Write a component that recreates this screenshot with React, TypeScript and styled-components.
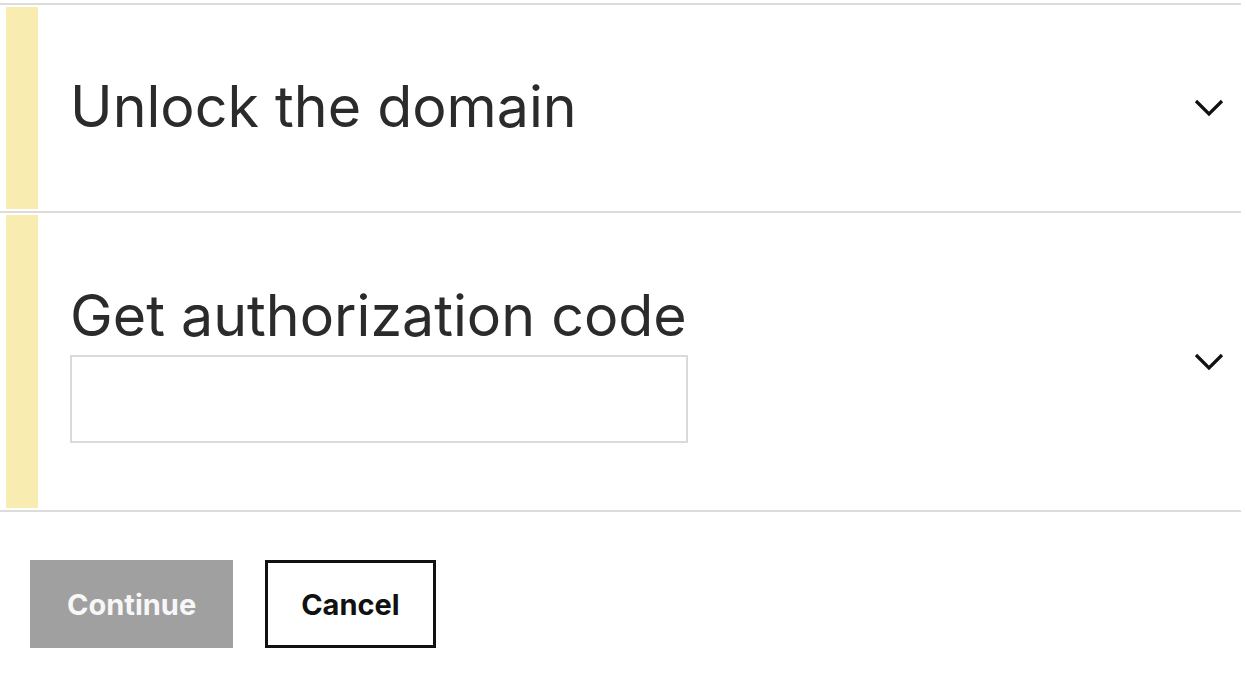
import React from "react";
import styled, { createGlobalStyle } from "styled-components";

const Global = createGlobalStyle`
  html, body { margin: 0; padding: 0; background: #ffffff; }
  body { font-family: Inter, "Liberation Sans", sans-serif; color: #2b2b2b; }
  * { box-sizing: border-box; }
`;

const Page = styled.div`
  width: 1241px;
  padding-top: 3px;
`;

const List = styled.div`
  border-top: 2px solid #dcdcdc;
`;

const Row = styled.section<{ $h: number }>`
  display: flex;
  align-items: stretch;
  height: ${(p) => p.$h}px;
  padding: 2px 16px 2px 6px;
  border-bottom: 2px solid #dcdcdc;
`;

const Bar = styled.div`
  width: 32px;
  flex: none;
  background: #f8ecb0;
`;

const Content = styled.div`
  flex: 1;
  display: flex;
  flex-direction: column;
  justify-content: center;
  padding-left: 32px;
`;

const Heading = styled.h2`
  margin: 0 0 5px;
  font-family: Inter, "Liberation Sans", sans-serif;
  font-weight: 400;
  font-size: 57.3px;
  line-height: 70px;
  color: #2b2b2b;
`;

const CodeInput = styled.input`
  display: block;
  width: 618px;
  height: 88px;
  margin: 0;
  border: 2px solid #dadada;
  background: #fff;
  outline: none;
  font-size: 28px;
`;

const Toggle = styled.div`
  flex: none;
  display: flex;
  align-items: center;
  justify-content: center;
  width: 32px;
`;

const Actions = styled.div`
  display: flex;
  gap: 32px;
  padding: 48px 0 0 30px;
`;

const Button = styled.button<{ $variant: "primary" | "outline" }>`
  height: 88px;
  font-family: Inter, "Liberation Sans", sans-serif;
  font-size: 29px;
  font-weight: 700;
  cursor: pointer;
  ${(p) =>
    p.$variant === "primary"
      ? `background: #a0a0a0; color: #f7f7f7; border: none; padding: 0 37px;`
      : `background: #ffffff; color: #111111; border: 3px solid #111111; padding: 0 33px;`}
`;

const Chevron = () => (
  <svg width="30" height="18" viewBox="0 0 30 18" fill="none">
    <path d="M2 2 L15 15 L28 2" stroke="#111" strokeWidth="3.2" />
  </svg>
);

export default function App() {
  return (
    <Page>
      <Global />
      <List>
        <Row $h={208}>
          <Bar />
          <Content>
            <Heading>Unlock the domain</Heading>
          </Content>
          <Toggle>
            <Chevron />
          </Toggle>
        </Row>
        <Row $h={299}>
          <Bar />
          <Content>
            <Heading>Get authorization code</Heading>
            <CodeInput aria-label="Authorization code" />
          </Content>
          <Toggle>
            <Chevron />
          </Toggle>
        </Row>
      </List>
      <Actions>
        <Button $variant="primary">Continue</Button>
        <Button $variant="outline">Cancel</Button>
      </Actions>
    </Page>
  );
}
